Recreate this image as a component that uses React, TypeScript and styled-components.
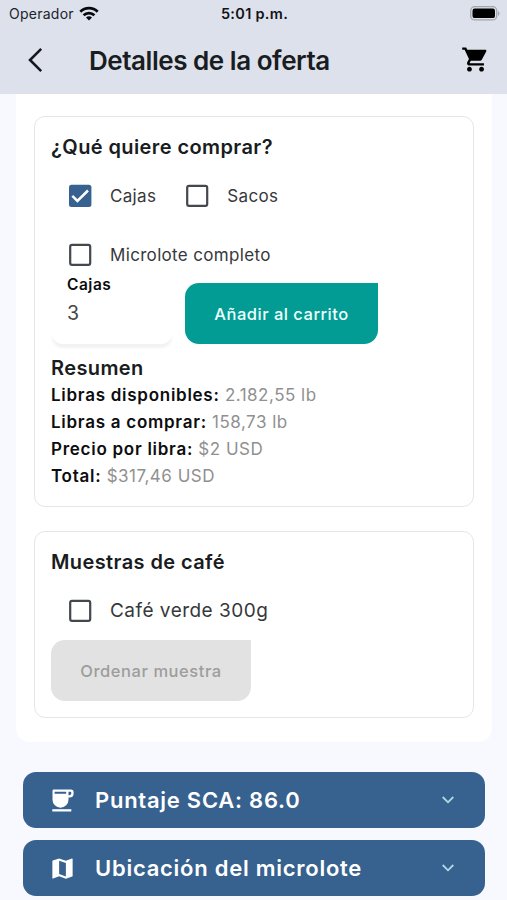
import React from 'react';
import styled, { createGlobalStyle } from 'styled-components';

const GlobalStyle = createGlobalStyle`
  * { box-sizing: border-box; }
  body { margin: 0; background: #f8f9ff; font-family: Inter, "Liberation Sans", sans-serif; }
  h1, h2, p { margin: 0; }
  button { font-family: inherit; border: 0; padding: 0; }
  svg { display: block; flex: none; }
`;

const Screen = styled.div`
  width: 507px;
  height: 900px;
  overflow: hidden;
  background: #f8f9ff;
  color: #191c20;
`;

const Header = styled.header`
  height: 93.5px;
  background: #dde1eb;
`;

const StatusBar = styled.div`
  height: 27px;
  padding: 0 7px 0 9px;
  display: grid;
  grid-template-columns: 1fr auto 1fr;
  align-items: center;
  font-size: 14px;
`;

const Carrier = styled.div`
  display: flex;
  align-items: center;
  gap: 5px;
  letter-spacing: 0.25px;
  color: #20232a;
`;

const Clock = styled.div`
  font-size: 14.5px;
  font-weight: 600;
  letter-spacing: 0.3px;
  color: #111318;
`;

const BatterySlot = styled.div`
  display: flex;
  justify-content: flex-end;
`;

const AppBar = styled.div`
  height: 65px;
  padding: 0 17px 0 27px;
  display: flex;
  align-items: center;
`;

const Title = styled.h1`
  flex: 1;
  margin: 2px 0 0 46px;
  font-size: 26px;
  line-height: 32px;
  font-weight: 600;
  letter-spacing: -0.46px;
  white-space: nowrap;
`;

const Panel = styled.main`
  margin: 0 15px 0 16px;
  height: 648.5px;
  padding: 22.5px 18px 0;
  display: flex;
  flex-direction: column;
  gap: 24px;
  background: #fff;
  border-radius: 0 0 14px 14px;
`;

const Card = styled.section<{ $height: number }>`
  height: ${(p) => p.$height}px;
  padding: 16px;
  border: 1.5px solid #e6e6e8;
  border-radius: 11px;
`;

const Heading = styled.h2`
  font-size: 20px;
  line-height: 28px;
  font-weight: 600;
  letter-spacing: 0.4px;
  white-space: nowrap;
`;

const Options = styled.div`
  display: flex;
  flex-wrap: wrap;
  column-gap: 29px;
  margin-top: 5px;
  padding-left: 17px;
`;

const Option = styled.label<{ $size?: number; $height?: number; $spacing?: number }>`
  display: flex;
  align-items: center;
  gap: 18px;
  height: ${(p) => p.$height ?? 59}px;
  font-size: ${(p) => p.$size ?? 17}px;
  letter-spacing: ${(p) => p.$spacing ?? 0.33}px;
  color: #36383b;
  white-space: nowrap;
`;

const PurchaseRow = styled.div`
  display: flex;
  align-items: flex-end;
  gap: 12px;
  margin-top: -10px;
`;

const Field = styled.div`
  width: 122px;
  height: 70px;
  padding-left: 16px;
  border-radius: 12px;
  background: #fff;
  box-shadow: 0 5px 3px -1px #f2f2f2;
`;

const FieldLabel = styled.div`
  font-size: 15.5px;
  line-height: 21px;
  font-weight: 600;
  letter-spacing: 0.5px;
  color: #0c0c0d;
`;

const FieldValue = styled.div`
  margin-top: 5px;
  font-size: 19.5px;
  line-height: 26px;
  color: #444;
`;

const Action = styled.button<{ $width: number; $disabled?: boolean }>`
  display: block;
  width: ${(p) => p.$width}px;
  height: 61px;
  border-radius: 14px 0 14px 14px;
  background: ${(p) => (p.$disabled ? '#e2e2e2' : '#029c94')};
  color: ${(p) => (p.$disabled ? '#9d9d9d' : '#eefffc')};
  font-size: 16.5px;
  font-weight: 500;
  letter-spacing: ${(p) => (p.$disabled ? 0.55 : 0.5)}px;
  white-space: nowrap;
`;

const Summary = styled.div`
  margin-top: 10px;
`;

const SummaryLine = styled.p`
  font-size: 17px;
  line-height: 27px;
  letter-spacing: 0.5px;
  color: #909090;
  white-space: nowrap;
`;

const Strong = styled.span`
  font-weight: 600;
  letter-spacing: 0.73px;
  color: #0d0d0f;
`;

const Sections = styled.div`
  display: flex;
  flex-direction: column;
  gap: 12px;
  padding: 30px 22px 0 23px;
`;

const SectionBar = styled.button`
  display: flex;
  align-items: center;
  width: 100%;
  height: 56px;
  padding: 0 29px 0 26px;
  border-radius: 13px;
  background: #37618e;
  color: #fff;
  text-align: left;
`;

const SectionTitle = styled.span`
  flex: 1;
  margin: 0 0 1px 19px;
  font-size: 22px;
  font-weight: 600;
  letter-spacing: 0.74px;
  white-space: nowrap;
`;

const Wifi = () => (
  <svg width="20" height="15" viewBox="0 0 20 15" fill="none" stroke="#08090c" strokeWidth="2.7">
    <path d="M1.3 5.7C6.1.9 13.9.9 18.7 5.7" />
    <path d="M4.6 9.2c3-2.9 7.8-2.9 10.8 0" />
    <path d="M10 14.4 7 11.4c1.7-1.6 4.3-1.6 6 0z" fill="#08090c" stroke="none" />
  </svg>
);

const Battery = () => (
  <svg width="30" height="15" viewBox="0 0 30 15">
    <rect x="0.7" y="0.7" width="26" height="13.2" rx="4" fill="#dde1eb" stroke="#a2a5ac" strokeWidth="1.3" />
    <rect x="2.5" y="2.5" width="22.5" height="9.6" rx="2.2" fill="#000" />
    <path d="M28 5c2 1 2 4 0 5z" fill="#a2a5ac" />
  </svg>
);

const BackIcon = () => (
  <svg width="16" height="26" viewBox="0 0 16 26" fill="none" stroke="#15181d" strokeWidth="2.6">
    <path d="M14.2 1.8 3 13l11.2 11.2" />
  </svg>
);

const CartIcon = () => (
  <svg width="29" height="29" viewBox="0 0 24 24" fill="#000">
    <path d="M7 18c-1.1 0-1.99.9-1.99 2S5.900 22 7 22s2-.9 2-2-.9-2-2-2zM1 2v2h2l3.600 7.590-1.350 2.450c-.16.28-.25.61-.25.96 0 1.100.9 2 2 2h12v-2H7.420c-.14 0-.25-.11-.25-.25l.03-.12.900-1.630h7.450c.75 0 1.410-.41 1.750-1.030l3.580-6.490c.08-.14.12-.31.12-.48 0-.55-.45-1-1-1H5.210l-.94-2H1zm16 16c-1.100 0-1.990.9-1.990 2s.89 2 1.990 2 2-.9 2-2-.9-2-2-2z" />
  </svg>
);

const CupIcon = () => (
  <svg width="27" height="27" viewBox="0 0 27 27">
    <path
      fill="#fff"
      fillRule="evenodd"
      d="M4.800 2.500h17.100a2.700 2.700 0 0 1 2.700 2.700v1.200a4 4 0 0 1-4 4h-1.100v2.300a8 8 0 0 1-16 0V4c0-.9.6-1.500 1.300-1.500zM5.600 4.800v2h11.600v-2zm13.900 0v3.400h.8a2 2 0 0 0 2-2v-.4a1 1 0 0 0-1-1z"
    />
    <path fill="#fff" d="M3.300 22.200h19v2.300h-19z" />
  </svg>
);

const MapIcon = () => (
  <svg width="27" height="27" viewBox="0 0 24 24" fill="#fff">
    <path d="m20.500 3-.16.03L15 5.100 9 3 3.360 4.900c-.21.07-.36.25-.36.48V20.500c0 .28.22.5.500.5l.16-.03L9 18.900l6 2.100 5.640-1.900c.21-.07.36-.25.36-.48V3.500c0-.28-.22-.5-.5-.5zM15 19l-6-2.110V5l6 2.110V19z" />
  </svg>
);

const Chevron = () => (
  <svg width="16" height="12" viewBox="0 0 16 12" fill="none" stroke="#b4d9e6" strokeWidth="1.8">
    <path d="M2.700 3 8 8.300 13.300 3" />
  </svg>
);

const Checkbox = ({ checked = false }: { checked?: boolean }) => (
  <svg width="24" height="24" viewBox="0 0 24 24" fill="none">
    {checked ? (
      <>
        <rect x="1" y="0.700" width="22.400" height="22.400" rx="2.500" fill="#37618e" />
        <path d="m4.300 11.900 5.100 5.100L20 6.500" stroke="#fff" strokeWidth="2.500" />
      </>
    ) : (
      <rect x="2.200" y="1.900" width="20" height="20" rx="1.800" stroke="#43474e" strokeWidth="2.200" />
    )}
  </svg>
);

const summary = [
  ['Libras disponibles:', '2.182,55 lb'],
  ['Libras a comprar:', '158,73 lb'],
  ['Precio por libra:', '$2 USD'],
  ['Total:', '$317,46 USD'],
];

export default function App() {
  return (
    <Screen>
      <GlobalStyle />
      <Header>
        <StatusBar>
          <Carrier>Operador <Wifi /></Carrier>
          <Clock>5:01 p.m.</Clock>
          <BatterySlot><Battery /></BatterySlot>
        </StatusBar>
        <AppBar>
          <BackIcon />
          <Title>Detalles de la oferta</Title>
          <CartIcon />
        </AppBar>
      </Header>
      <Panel>
        <Card $height={391}>
          <Heading>¿Qué quiere comprar?</Heading>
          <Options>
            <Option><Checkbox checked />Cajas</Option>
            <Option><Checkbox />Sacos</Option>
            <Option><Checkbox />Microlote completo</Option>
          </Options>
          <PurchaseRow>
            <Field>
              <FieldLabel>Cajas</FieldLabel>
              <FieldValue>3</FieldValue>
            </Field>
            <Action $width={193}>Añadir al carrito</Action>
          </PurchaseRow>
          <Summary>
            <Heading>Resumen</Heading>
            {summary.map(([label, value]) => (
              <SummaryLine key={label}><Strong>{label}</Strong> {value}</SummaryLine>
            ))}
          </Summary>
        </Card>
        <Card $height={187}>
          <Heading>Muestras de café</Heading>
          <Options>
            <Option $size={19} $spacing={0.48} $height={59}><Checkbox />Café verde 300g</Option>
          </Options>
          <Action $width={200} $disabled>Ordenar muestra</Action>
        </Card>
      </Panel>
      <Sections>
        <SectionBar>
          <CupIcon />
          <SectionTitle>Puntaje SCA: 86.0</SectionTitle>
          <Chevron />
        </SectionBar>
        <SectionBar>
          <MapIcon />
          <SectionTitle>Ubicación del microlote</SectionTitle>
          <Chevron />
        </SectionBar>
      </Sections>
    </Screen>
  );
}
